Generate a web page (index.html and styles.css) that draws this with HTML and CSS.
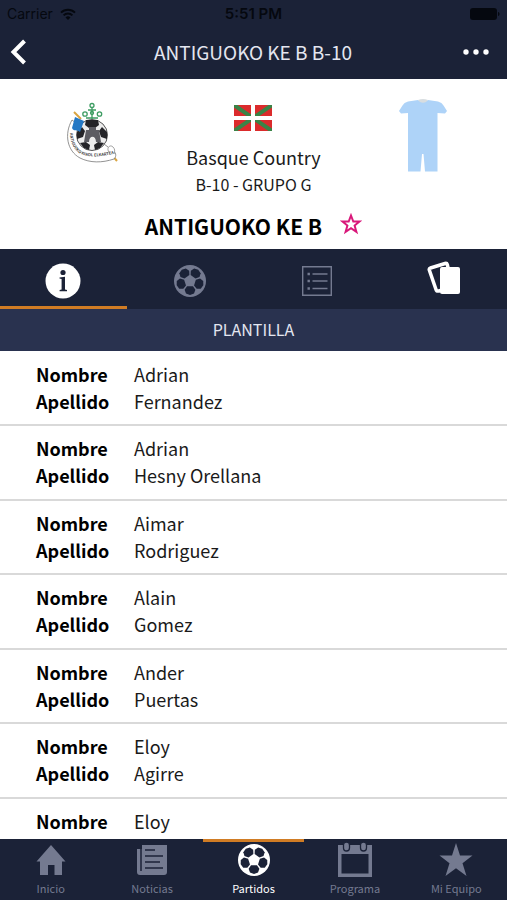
FILE: index.html
```html
<!doctype html>
<html lang="es">
<head>
    <meta charset="UTF-8">
    <meta name="viewport" content="width=device-width, initial-scale=1.0">
    <title>Antiguoko KE B B-10</title>
    <link rel="stylesheet" href="styles.css">
</head>
<body>
    <!-- shared ball icon -->
    <svg class="defs" aria-hidden="true">
        <defs>
            <path id="patch" d="M13 21.200h6l2.400 3.600-1.400 3.800-4 1.400-4-1.400-1.400-3.800z"/>
            <symbol id="ball" viewBox="0 0 32 32">
                <circle cx="16" cy="16" r="16" fill="currentColor"/>
                <g fill="#1b2237">
                    <use href="#patch"/>
                    <use href="#patch" transform="rotate(72 16 16)"/>
                    <use href="#patch" transform="rotate(144 16 16)"/>
                    <use href="#patch" transform="rotate(216 16 16)"/>
                    <use href="#patch" transform="rotate(288 16 16)"/>
                </g>
            </symbol>
        </defs>
    </svg>

    <div class="wrapper">
        <div class="status">
            <span class="carrier">Carrier
                <svg width="16" height="12" viewBox="0 0 16 12" fill="none" stroke="currentColor" stroke-width="2">
                    <path d="M1 4.600a10 10 0 0 1 14 0M3.600 7.400a6.200 6.200 0 0 1 8.800 0"/>
                    <path d="M8 12L5.500 9.400a3.600 3.600 0 0 1 5 0z" fill="currentColor" stroke="none"/>
                </svg>
            </span>
            <span class="time">5:51 PM</span>
            <svg class="battery" width="30" height="12" viewBox="0 0 30 12" fill="currentColor">
                <rect width="27" height="12" rx="3"/>
                <path d="M28 4c2 .5 2 3.500 0 4z"/>
            </svg>
        </div>

        <header class="header">
            <button type="button" aria-label="Volver">
                <svg width="18" height="26" viewBox="0 0 18 26" fill="none" stroke="currentColor" stroke-width="4">
                    <path d="M15.500 2L4.500 13l11 11"/>
                </svg>
            </button>
            <h1>ANTIGUOKO KE B B-10</h1>
            <button type="button" aria-label="Más opciones">
                <svg width="26" height="6" viewBox="0 0 26 6" fill="currentColor">
                    <circle cx="3" cy="3" r="2.700"/>
                    <circle cx="13" cy="3" r="2.700"/>
                    <circle cx="23" cy="3" r="2.700"/>
                </svg>
            </button>
        </header>

        <section class="team">
            <div class="summary">
                <svg class="crest" width="60" height="63" viewBox="10 12 60 63">
                    <g fill="none" stroke="#3d9c62" stroke-width="1.300">
                        <circle cx="42" cy="15.500" r="2"/>
                        <circle cx="35" cy="24" r="2.200"/>
                        <circle cx="49.500" cy="24" r="2.200"/>
                        <circle cx="42" cy="23" r="1.500"/>
                        <path d="M42 18v13M36 28h12M38 20h8"/>
                    </g>
                    <path d="M24 22l7 7M61 64l6 7" stroke="#d9a542" stroke-width="2"/>
                    <path d="M22 30C14 44 17 61 30 68c10 5 22 5 34 1 3-3 2-7-2-9z" fill="#fff" stroke="#777" stroke-width=".8"/>
                    <path d="M59 62c-3-4 1-8 4-5 2 2 2 4 1 7" fill="#fff" stroke="#888" stroke-width=".8"/>
                    <circle cx="42" cy="45" r="15.500" fill="#ececec" stroke="#555" stroke-width="1"/>
                    <g fill="#242428">
                        <path d="M36 30h12l1 5-4 3h-6l-4-3z"/>
                        <path d="M27 42l5-5 3 4-2 6-6 2z"/>
                        <path d="M57 42l-5-5-3 4 2 6 6 2z"/>
                        <path d="M30 53l6-1 4 3-1 5-5-2z"/>
                        <path d="M54 53l-6-1-4 3 1 5 5-2z"/>
                    </g>
                    <path d="M34 52l2-12h3v-3h7v3h3l2 12h-5c0-7-7-7-7 0z" fill="#5c5c62"/>
                    <path id="ribbon" d="M20 43c0 12 6 21 17 23 9 1 17 0 26-2" fill="none"/>
                    <text class="motto"><textPath href="#ribbon">ANTIGUOKO KIROL ELKARTEA</textPath></text>
                    <path d="M25 27l9 4-4 11c-3-3-6 0-8-4z" fill="#2478c4"/>
                </svg>
                <div class="place">
                    <svg width="38" height="26" viewBox="0 0 38 26">
                        <path d="M0 0h38v26H0z" fill="#db2b2c"/>
                        <path d="M0 0l38 26M38 0L0 26" stroke="#3a8447" stroke-width="4"/>
                        <path d="M19 0v26M0 13h38" stroke="#fff" stroke-width="4"/>
                    </svg>
                    <p class="country">Basque Country</p>
                    <p class="group">B-10 - GRUPO G</p>
                </div>
                <svg class="kit" width="48" height="73" viewBox="0 0 48 73">
                    <path d="M19 1q5 3 10 0l10 1.500q4 1 5.500 4L48 12l-2 2.500-7.500-.5v58.500H26L24.500 55h-1.500l-1.500 17.500H9V14l-7 .5L0 12l3.500-5.500q1.500-3 5.500-4z" fill="#aed3f8"/>
                    <path d="M19 1q5-2 10 0l-2 2q-3 1.500-6 0z" fill="#d8dde0"/>
                </svg>
            </div>
            <div class="name">
                <h2>ANTIGUOKO KE B</h2>
                <button type="button" aria-label="Añadir a favoritos">
                    <svg width="22" height="22" viewBox="0 0 22 22" fill="none" stroke="currentColor" stroke-width="2">
                        <path d="M11 2.500l2.300 6h6.200l-4.900 4 1.800 6.300L11 15.200l-5.400 3.600 1.800-6.300-4.900-4h6.200z"/>
                    </svg>
                </button>
            </div>
        </section>

        <nav class="tabs">
            <a class="active" href="#info" aria-label="Información">
                <svg width="36" height="36" viewBox="0 0 36 36">
                    <circle cx="18" cy="18" r="17.500" fill="currentColor"/>
                    <g fill="#1b2237">
                        <circle cx="18" cy="9.500" r="2.600"/>
                        <path d="M14.500 14.500l5.500-.8v12.800l2 .5v1.200h-7.400V27l2-.5V16l-2.100-.4z"/>
                    </g>
                </svg>
            </a>
            <a href="#partidos" aria-label="Partidos">
                <svg width="32" height="32"><use href="#ball"/></svg>
            </a>
            <a href="#clasificacion" aria-label="Clasificación">
                <svg width="30" height="30" viewBox="0 0 30 30" fill="none" stroke="currentColor">
                    <path d="M.7.700h28.600v28.600H.7z" stroke-width="1.400"/>
                    <path d="M5.500 8h2.400M5.500 15h2.400M5.500 22.500h2.400" stroke-width="2.400"/>
                    <path d="M10.500 8h15M10.500 15h15M10.500 22.500h15" stroke-width="1.600"/>
                </svg>
            </a>
            <a class="light" href="#tarjetas" aria-label="Tarjetas">
                <svg width="34" height="36" viewBox="0 0 34 36">
                    <path d="M3.500 8L18 3.500q1.800-.5 2.300 1l5 22L12 31q-2.400.5-3-1.500L2.300 10q-.4-1.500 1.200-2z" fill="none" stroke="currentColor" stroke-width="3.500"/>
                    <rect x="13" y="7" width="20" height="27" rx="2" fill="currentColor"/>
                </svg>
            </a>
        </nav>

        <h3 class="heading">PLANTILLA</h3>

        <ul class="players">
            <li><dl><dt>Nombre</dt><dd>Adrian</dd><dt>Apellido</dt><dd>Fernandez</dd></dl></li>
            <li><dl><dt>Nombre</dt><dd>Adrian</dd><dt>Apellido</dt><dd>Hesny Orellana</dd></dl></li>
            <li><dl><dt>Nombre</dt><dd>Aimar</dd><dt>Apellido</dt><dd>Rodriguez</dd></dl></li>
            <li><dl><dt>Nombre</dt><dd>Alain</dd><dt>Apellido</dt><dd>Gomez</dd></dl></li>
            <li><dl><dt>Nombre</dt><dd>Ander</dd><dt>Apellido</dt><dd>Puertas</dd></dl></li>
            <li><dl><dt>Nombre</dt><dd>Eloy</dd><dt>Apellido</dt><dd>Agirre</dd></dl></li>
            <li><dl><dt>Nombre</dt><dd>Eloy</dd></dl></li>
        </ul>

        <nav class="footer">
            <a href="#inicio">
                <svg width="32" height="32" viewBox="0 0 32 32" fill="currentColor">
                    <path d="M16 1l14.500 16.500H27V31h-7.500V21h-6.500v10H5V17.500H1.500z"/>
                </svg>
                Inicio
            </a>
            <a href="#noticias">
                <svg width="32" height="32" viewBox="0 0 32 32">
                    <path d="M6 1h25v27q0 3-3 3H4q-3 0-3-3V5h5z" fill="currentColor"/>
                    <path d="M5 5v22M9 6h10M9 12h18M9 18h15M9 24h18" fill="none" stroke="#1b2237" stroke-width="1.500"/>
                </svg>
                Noticias
            </a>
            <a class="active" href="#partidos">
                <svg width="32" height="32"><use href="#ball"/></svg>
                Partidos
            </a>
            <a href="#programa">
                <svg width="36" height="36" viewBox="0 0 36 36">
                    <path d="M1 3h34v32H1zM4.500 12v19.500h27V12z" fill="currentColor" fill-rule="evenodd"/>
                    <g fill="currentColor" stroke="#1b2237" stroke-width="1.300">
                        <rect x="6.500" y="0" width="6" height="9" rx="3"/>
                        <rect x="23.500" y="0" width="6" height="9" rx="3"/>
                    </g>
                </svg>
                Programa
            </a>
            <a href="#equipo">
                <svg width="34" height="34" viewBox="0 0 34 34" fill="currentColor">
                    <path d="M17 0l4 12.500h12.500l-10 7.700L27.500 33 17 25.200 6.500 33l4-12.800-10-7.700H13z"/>
                </svg>
                Mi Equipo
            </a>
        </nav>
    </div>
</body>
</html>
```

FILE: styles.css
```css
*{padding: 0;margin: 0;box-sizing: border-box}
body{
    font-family: "Noto Sans CJK SC", "Noto Sans", sans-serif;
    font-size: 18px;
    line-height: 27px;
    color: #1a1a1a;
    background-color: #fff;
}
svg{display: block;flex: none}
button{
    border: 0;
    background: none;
    color: inherit;
    cursor: pointer;
}
a{color: inherit;text-decoration: none}
ul{list-style: none}
.defs{
    position: absolute;
    width: 0;
    height: 0;
}
.wrapper{
    display: flex;
    flex-direction: column;
    height: 100vh;
    overflow: hidden;
}
.status{
    display: grid;
    grid-template-columns: 1fr auto 1fr;
    align-items: center;
    padding: 0 7px;
    font: 14px/27px Inter, sans-serif;
    color: #05080f;
    background-color: #1b2237;
}
.status .carrier{
    display: flex;
    align-items: center;
    gap: 7px;
}
.status .time{
    font-size: 15px;
    font-weight: 600;
}
.status .battery{justify-self: end}
.header{
    display: grid;
    grid-template-columns: 1fr auto 1fr;
    align-items: center;
    padding: 0 18px 2px 9px;
    height: 52px;
    flex: none;
    color: #fff;
    background-color: #1b2237;
}
.header h1{
    padding: 0 0 2px 8px;
    font-size: 19px;
    font-weight: 400;
    color: #e4e6f0;
}
.header button:first-child{justify-self: start}
.header button:last-child{justify-self: end}
.team{
    flex: none;
    padding-bottom: 8px;
}
.team .summary{
    display: grid;
    grid-template-columns: 1fr auto 1fr;
    padding: 0 60px;
}
.team .crest{margin-top: 23px}
.team .motto{
    font-size: 4px;
    font-weight: 700;
    fill: #444;
}
.team .kit{
    justify-self: end;
    margin-top: 20px;
}
.team .place{
    display: flex;
    flex-direction: column;
    align-items: center;
    padding-top: 26px;
}
.team .country{margin-top: 13px}
.team .group{font-size: 16px}
.team .name{
    display: flex;
    align-items: center;
    justify-content: center;
    gap: 18px;
    margin-top: 13px;
}
.team .name h2{
    font-size: 21px;
    line-height: 30px;
    color: #000;
}
.team .name button{
    padding-bottom: 4px;
    color: #d9187a;
}
.tabs{
    display: flex;
    flex: none;
    height: 60px;
    color: #747a90;
    background-color: #1b2237;
}
.tabs a{
    flex: 1;
    display: flex;
    align-items: center;
    justify-content: center;
    padding-top: 6px;
    border-bottom: 3px solid transparent;
}
.tabs .light{
    color: #fff;
    padding: 0;
}
.tabs .active{
    color: #fff;
    border-color: #d07c24;
}
.heading{
    flex: none;
    padding-bottom: 2px;
    font-size: 16px;
    font-weight: 400;
    line-height: 40px;
    text-align: center;
    color: #e4e6f0;
    background-color: #29324f;
}
.players{
    flex: 1;
    min-height: 0;
    padding-top: 1px;
    overflow: hidden;
}
.players li{
    padding: 9px 36px;
    border-bottom: 2px solid #d9d9d9;
}
.players li:nth-child(even){padding-bottom: 10px}
.players dl{
    display: grid;
    grid-template-columns: 98px 1fr;
}
.players dt{
    font-weight: 700;
    color: #000;
}
.footer{
    display: flex;
    flex: none;
    height: 61px;
    font-size: 11px;
    line-height: 16px;
    color: #747a90;
    background-color: #1b2237;
}
.footer a{
    flex: 1;
    display: flex;
    flex-direction: column;
    align-items: center;
    border-top: 3px solid transparent;
}
.footer svg{
    height: 36px;
    margin-bottom: 2px;
}
.footer .active{
    color: #fff;
    border-color: #d07c24;
}
```
